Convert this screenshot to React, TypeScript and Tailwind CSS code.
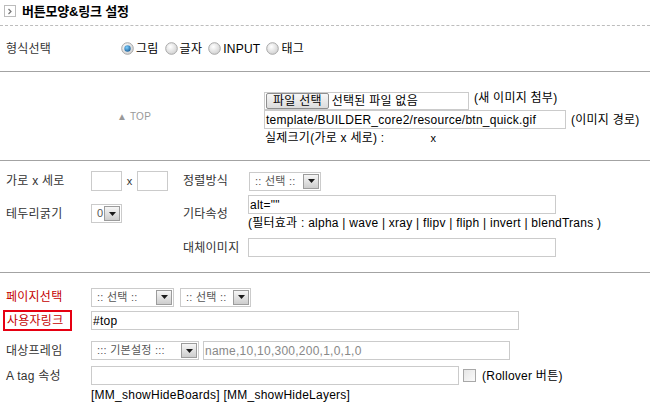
import React from "react";

function Arrow() {
    return (
        <span className="w-[16px] h-[15px] shrink-0 border border-[#9c9c9c] bg-linear-to-b from-[#f6f6f6] to-[#cdcdcd] flex items-center justify-center">
            <svg width="7" height="4" viewBox="0 0 7 4">
                <path d="M0 0h7L3.5 4z" fill="#1a1a1a" />
            </svg>
        </span>
    );
}

function Select({ text, width }: { text: string; width: string }) {
    return (
        <div className={`${width} h-[19px] shrink-0 border border-[#cbcbcb] bg-white flex items-center justify-between pl-[5px] pr-[1px]`}>
            <span className="text-[11px] text-[#555] whitespace-nowrap">{text}</span>
            <Arrow />
        </div>
    );
}

function Radio({ checked }: { checked?: boolean }) {
    return (
        <svg width="13" height="13" viewBox="0 0 13 13" className="shrink-0">
            <defs>
                <radialGradient id="rg" cx="40%" cy="35%" r="70%">
                    <stop offset="0" stopColor="#ffffff" />
                    <stop offset="1" stopColor="#cfcfcf" />
                </radialGradient>
                <radialGradient id="rb" cx="40%" cy="35%" r="70%">
                    <stop offset="0" stopColor="#7fd0ff" />
                    <stop offset="1" stopColor="#1a5e98" />
                </radialGradient>
            </defs>
            <circle cx="6.5" cy="6.5" r="5.8" fill="url(#rg)" stroke="#a8a8a8" strokeWidth="1" />
            {checked && <circle cx="6.5" cy="6.5" r="3.2" fill="url(#rb)" />}
        </svg>
    );
}

function Input({ width, value, muted }: { width: string; value?: string; muted?: boolean }) {
    return (
        <div className={`${width} h-[19px] shrink-0 border border-[#cbcbcb] bg-white flex items-center pl-[1px] overflow-hidden`}>
            <span className={`whitespace-nowrap ${muted ? "text-[#888]" : "text-black"}`}>{value}</span>
        </div>
    );
}

export default function App() {
    return (
        <main className="w-[650px] h-[411px] bg-white overflow-hidden text-[12px] leading-none tracking-[0.25px] text-[#333] font-['Liberation_Sans','Noto_Sans_CJK_KR',sans-serif]">
            {/* Title */}
            <header className="h-[26px] flex items-center pl-[4px] pb-[3px] border-b border-dashed border-[#bdbdbd]">
                <span className="w-[12px] h-[12px] border border-[#bcbcbc] flex items-center justify-center">
                    <svg width="6" height="7" viewBox="0 0 6 7">
                        <path d="M1.5 1l2.5 2.5-2.5 2.5" fill="none" stroke="#777" strokeWidth="1.2" />
                    </svg>
                </span>
                <h1 className="ml-[6px] text-[13px] font-bold text-black tracking-[-0.2px]">버튼모양&amp;링크 설정</h1>
            </header>

            {/* 형식선택 */}
            <section className="h-[46px] flex items-center border-b border-[#a3a3a3]">
                <span className="w-[121px] pl-[6px]">형식선택</span>
                <div className="flex items-center gap-[2px]">
                    <Radio checked />
                    <span className="mr-[4px] text-black">그림</span>
                    <Radio />
                    <span className="mr-[4px] text-black">글자</span>
                    <Radio />
                    <span className="mr-[4px] text-black">INPUT</span>
                    <Radio />
                    <span className="text-black">태그</span>
                </div>
            </section>

            {/* image */}
            <section className="h-[89px] flex border-b border-[#a3a3a3]">
                <div className="w-[264px] flex items-center justify-center pt-[2px] pl-[4px]">
                    <span className="text-[10px] text-[#999]">▲ TOP</span>
                </div>
                <div className="flex flex-col pt-[20px] text-black">
                    <div className="flex items-center">
                        <div className="w-[205px] h-[18px] border border-[#cbcbcb] flex items-center pl-[1px]">
                            <span className="h-[16px] px-[6px] border border-[#8f8f8f] rounded-[2px] bg-linear-to-b from-[#f7f7f7] to-[#dcdcdc] flex items-center">파일 선택</span>
                            <span className="ml-[3px] whitespace-nowrap">선택된 파일 없음</span>
                        </div>
                        <span className="ml-[5px] -mt-[6px]">(새 이미지 첨부)</span>
                    </div>
                    <div className="flex items-center">
                        <Input width="w-[302px]" value="template/BUILDER_core2/resource/btn_quick.gif" />
                        <span className="ml-[5px]">(이미지 경로)</span>
                    </div>
                    <div className="flex items-center h-[18px] pl-[1px]">
                        <span className="whitespace-nowrap">실제크기(가로 x 세로) :</span>
                        <span className="ml-[46px] text-[11px]">x</span>
                    </div>
                </div>
            </section>

            {/* size / align / attrs */}
            <section className="h-[112px] pt-[10px] border-b border-[#a3a3a3]">
                <div className="h-[20px] flex items-center">
                    <span className="w-[91px] pl-[6px]">가로 x 세로</span>
                    <div className="w-[92px] flex items-center">
                        <div className="w-[31px] h-[20px] border border-[#cbcbcb]" />
                        <span className="w-[15px] text-center text-[11px]">x</span>
                        <div className="w-[31px] h-[20px] border border-[#cbcbcb]" />
                    </div>
                    <span className="w-[66px]">정렬방식</span>
                    <Select text=":: 선택 ::" width="w-[72px]" />
                </div>
                <div className="mt-[4px] h-[37px] flex items-center">
                    <span className="w-[91px] pl-[6px]">테두리굵기</span>
                    <div className="w-[92px]">
                        <Select text="0" width="w-[31px]" />
                    </div>
                    <span className="w-[65px]">기타속성</span>
                    <div className="flex flex-col">
                        <Input width="w-[308px]" value={'alt=""'} />
                        <span className="h-[18px] flex items-center whitespace-nowrap text-black">
                            (필터효과 : alpha | wave | xray | flipv | fliph | invert | blendTrans )
                        </span>
                    </div>
                </div>
                <div className="mt-[6px] h-[19px] flex items-center">
                    <span className="w-[183px]" />
                    <span className="w-[65px]">대체이미지</span>
                    <Input width="w-[308px]" />
                </div>
            </section>

            {/* link */}
            <section className="pt-[15px]">
                <div className="h-[18px] flex items-center">
                    <span className="w-[91px] pl-[6px] text-[#c40000]">페이지선택</span>
                    <div className="flex items-center gap-[6px]">
                        <Select text=":: 선택 ::" width="w-[83px]" />
                        <Select text=":: 선택 ::" width="w-[71px]" />
                    </div>
                </div>
                <div className="mt-[4px] h-[21px] flex items-center">
                    <div className="w-[91px]">
                        <span className="ml-[3px] h-[21px] w-[69px] border-2 border-[#e60012] text-[#c40000] flex items-center pl-[2px]">사용자링크</span>
                    </div>
                    <Input width="w-[428px]" value="#top" />
                </div>
                <div className="mt-[10px] h-[19px] flex items-center">
                    <span className="w-[91px] pl-[6px]">대상프레임</span>
                    <Select text="::: 기본설정 :::" width="w-[108px]" />
                    <div className="ml-[4px]">
                        <Input width="w-[307px]" value="name,10,10,300,200,1,0,1,0" muted />
                    </div>
                </div>
                <div className="mt-[6px] h-[19px] flex items-center">
                    <span className="w-[91px] pl-[6px]">A tag 속성</span>
                    <Input width="w-[368px]" />
                    <span className="ml-[4px] w-[13px] h-[13px] border border-[#a8a8a8] bg-linear-to-br from-[#e6e6e6] to-[#fafafa]" />
                    <span className="ml-[6px] text-black">(Rollover 버튼)</span>
                </div>
                <div className="mt-[2px] h-[16px] flex items-center pl-[91px] text-black">
                    [MM_showHideBoards] [MM_showHideLayers]
                </div>
            </section>
        </main>
    );
}
